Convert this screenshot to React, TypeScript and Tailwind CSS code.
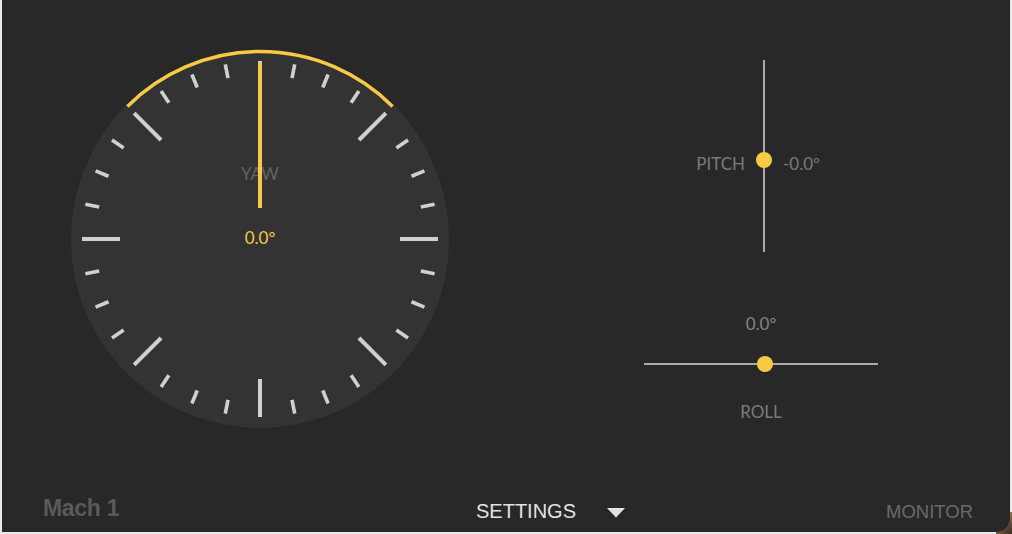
import React from "react";

const YELLOW = "#f8c945";

function Gauge() {
  const cx = 200;
  const cy = 200;
  const ticks = Array.from({ length: 32 }, (_, i) => i);
  const rad = (d: number) => (d * Math.PI) / 180;
  const arcR = 187.5;
  const a1 = { x: cx - arcR * Math.sin(rad(45)), y: cy - arcR * Math.cos(rad(45)) };
  const a2 = { x: cx + arcR * Math.sin(rad(45)), y: cy - arcR * Math.cos(rad(45)) };
  return (
    <svg width={400} height={400} viewBox="0 0 400 400" className="block shrink-0">
      <circle cx={cx} cy={cy} r={189} fill="#333333" />
      {ticks.map((i) => {
        const major = i % 4 === 0;
        const a = rad(i * 11.25);
        const r1 = major ? 140 : 164;
        const r2 = 178;
        return (
          <line
            key={i}
            x1={cx + r1 * Math.sin(a)}
            y1={cy - r1 * Math.cos(a)}
            x2={cx + r2 * Math.sin(a)}
            y2={cy - r2 * Math.cos(a)}
            stroke="#d0d0d0"
            strokeWidth={major ? 4 : 3.6}
          />
        );
      })}
      <path
        d={`M ${a1.x} ${a1.y} A ${arcR} ${arcR} 0 0 1 ${a2.x} ${a2.y}`}
        fill="none"
        stroke={YELLOW}
        strokeWidth={3.5}
      />
      <text
        x={cx}
        y={141}
        textAnchor="middle"
        fill="#646464"
        style={{ fontFamily: "Lato, 'Open Sans', sans-serif", fontSize: 17 }}
      >
        YAW
      </text>
      <line x1={cx} y1={24} x2={cx} y2={169} stroke={YELLOW} strokeWidth={4} />
      <text
        x={cx}
        y={205}
        textAnchor="middle"
        fill={YELLOW}
        style={{ fontFamily: "Lato, 'Open Sans', sans-serif", fontSize: 17 }}
      >
        0.0º
      </text>
    </svg>
  );
}

export default function App() {
  return (
    <div className="relative w-[1012px] h-[534px] bg-[#e9e9e9] pl-[2px] pr-[2px] pb-[2px] overflow-hidden">
      <div className="absolute right-0 bottom-0 w-[16px] h-[22px] bg-[radial-gradient(circle_at_100%_100%,#3a2a1c_0%,#7a5a3c_55%,#b08a62_100%)]" />
      <div className="relative w-full h-full bg-[#282828] rounded-br-[14px] flex flex-col">
        <div className="flex h-[496px]" style={{ fontFamily: "Lato, 'Open Sans', sans-serif" }}>
          <div className="ml-[58px] mt-[39px]">
            <Gauge />
          </div>
          <div className="ml-[184px] w-[234px] flex flex-col">
            <div className="flex items-start mt-[60px]">
              <div className="w-[112px] pr-[11px] text-right mt-[94px] text-[17px] leading-[20px] text-[#7b7b7b]">
                PITCH
              </div>
              <div className="relative w-[16px] h-[192px]">
                <div className="mx-auto w-[2px] h-full bg-[#a8a8a8]" />
                <div className="absolute left-0 top-[92px] w-[16px] h-[16px] rounded-full bg-[#f8c945]" />
              </div>
              <div className="pl-[11px] mt-[94px] text-[17px] leading-[20px] text-[#7b7b7b]">
                -0.0º
              </div>
            </div>
            <div className="mt-[62px] text-center text-[17px] leading-[20px] text-[#858585]">0.0º</div>
            <div className="relative h-[16px] mt-[22px]">
              <div className="absolute left-0 right-0 top-[7px] h-[2px] bg-[#a8a8a8]" />
              <div className="absolute left-[113px] top-0 w-[16px] h-[16px] rounded-full bg-[#f8c945]" />
            </div>
            <div className="mt-[30px] text-center text-[17px] leading-[20px] text-[#7b7b7b]">ROLL</div>
          </div>
        </div>
        <div
          className="flex items-start h-[36px]"
          style={{ fontFamily: "'Liberation Sans', Arial, sans-serif" }}
        >
          <div className="ml-[41px] w-[433px] text-[23px] leading-[24px] font-bold tracking-[-0.3px] text-[#5a5a5a]">
            Mach 1
          </div>
          <div className="mt-[3px] text-[20px] leading-[24px] text-[#e2e2e2]">SETTINGS</div>
          <svg width={18} height={10} viewBox="0 0 18 10" className="ml-[31px] mt-[12px] shrink-0">
            <polygon points="0,0 18,0 9,9.5" fill="#e2e2e2" />
          </svg>
          <div className="ml-auto mr-[37px] mt-[4px] text-[18.5px] leading-[24px] text-[#6a6a6a]">MONITOR</div>
        </div>
      </div>
    </div>
  );
}
